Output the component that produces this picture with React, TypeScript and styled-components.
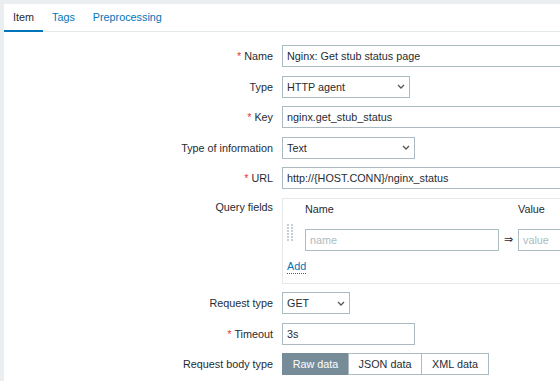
import React from "react";
import styled, { createGlobalStyle } from "styled-components";

const GlobalStyle = createGlobalStyle`
  html, body {
    margin: 0;
    padding: 0;
    overflow: hidden;
    background: #ebeef0;
  }
  body {
    font-family: "Liberation Sans", Arial, sans-serif;
    font-size: 10.8px;
    color: #1f2c33;
  }
  * {
    box-sizing: border-box;
  }
`;

const Page = styled.div`
  padding: 4px 0 0 4px;
  width: 100vw;
  height: 100vh;
  overflow: hidden;
`;

const Panel = styled.div`
  background: #ffffff;
  height: 100%;
  overflow: hidden;
`;

const TabList = styled.nav`
  display: flex;
  height: 28px;
  border-bottom: 1px solid #e4e9eb;
`;

const Tab = styled.a<{ $active?: boolean }>`
  display: flex;
  align-items: center;
  height: 28px;
  margin-bottom: -1px;
  padding: 0 9px 1px;
  border-bottom: 2px solid ${(p) => (p.$active ? "#0275b8" : "transparent")};
  color: ${(p) => (p.$active ? "#1f2c33" : "#0275b8")};
  cursor: pointer;
  white-space: nowrap;
`;

const Form = styled.div`
  display: grid;
  grid-template-columns: 269px 1fr;
  column-gap: 9px;
  row-gap: 8.5px;
  padding-top: 13px;
`;

const Label = styled.label<{ $top?: boolean }>`
  text-align: right;
  line-height: ${(p) => (p.$top ? "14px" : "22px")};
  padding-top: ${(p) => (p.$top ? "2px" : "0")};
  white-space: nowrap;
`;

const Asterisk = styled.span`
  color: #e33734;
  margin-right: 3px;
`;

const TextInput = styled.input<{ $width: number }>`
  display: block;
  flex: none;
  width: ${(p) => p.$width}px;
  height: 22px;
  padding: 0 4px;
  border: 1px solid #acbbc2;
  border-radius: 0;
  background: #fff;
  font: inherit;
  color: #1f2c33;
  outline: none;

  &::placeholder {
    color: #acbbc2;
  }
`;

const SelectBox = styled.div<{ $width: number }>`
  display: flex;
  align-items: center;
  justify-content: space-between;
  width: ${(p) => p.$width}px;
  height: 22px;
  padding: 0 4px;
  border: 1px solid #acbbc2;
  background: #fff;
  cursor: pointer;

  svg {
    flex: none;
  }
`;

const QueryBox = styled.div`
  width: 420px;
  border: 1px solid #e4e9eb;
  padding: 3px 4px 9px 4px;
`;

const QueryGrid = styled.div`
  display: grid;
  grid-template-columns: 18px 194px 19px 1fr;
  align-items: center;
`;

const HeadCell = styled.div`
  line-height: 14px;
  padding-bottom: 13px;
`;

const Handle = styled.div`
  align-self: start;
  margin-top: -5px;
  line-height: 0;
`;

const Arrow = styled.div`
  text-align: center;
  font-family: "DejaVu Sans", sans-serif;
  font-size: 11px;
  color: #1f2c33;
`;

const AddLink = styled.a`
  display: inline-block;
  margin-top: 8px;
  line-height: 14px;
  color: #0275b8;
  border-bottom: 1px dotted #0275b8;
  cursor: pointer;
`;

const Segments = styled.div`
  display: flex;
`;

const Segment = styled.button<{ $active?: boolean; $width: number }>`
  width: ${(p) => p.$width}px;
  height: 22px;
  padding: 0;
  margin-left: -1px;
  font: inherit;
  border: 1px solid ${(p) => (p.$active ? "#768d99" : "#acbbc2")};
  background: ${(p) => (p.$active ? "#768d99" : "#fff")};
  color: ${(p) => (p.$active ? "#fff" : "#1f2c33")};
  cursor: pointer;

  &:first-child {
    margin-left: 0;
  }
`;

function Chevron() {
  return (
    <svg width="8" height="5" viewBox="0 0 8 5">
      <polyline points="1,1 4,4 7,1" fill="none" stroke="#555" strokeWidth="1.3" />
    </svg>
  );
}

function DragHandle() {
  const dots = [];
  for (let r = 0; r < 6; r++) {
    for (let c = 0; c < 2; c++) {
      dots.push(<rect key={`${r}-${c}`} x={c * 4} y={r * 3} width="2" height="2" fill="#c5d0d6" />);
    }
  }
  return (
    <svg width="6" height="17" viewBox="0 0 6 17">
      {dots}
    </svg>
  );
}

function Select({ value, width }: { value: string; width: number }) {
  return (
    <SelectBox $width={width}>
      <span>{value}</span>
      <Chevron />
    </SelectBox>
  );
}

function Req() {
  return <Asterisk>*</Asterisk>;
}

export default function App() {
  return (
    <Page>
      <GlobalStyle />
      <Panel>
        <TabList>
          <Tab $active>Item</Tab>
          <Tab>Tags</Tab>
          <Tab>Preprocessing</Tab>
        </TabList>

        <Form>
          <Label><Req />Name</Label>
          <TextInput $width={408} defaultValue="Nginx: Get stub status page" />

          <Label>Type</Label>
          <Select value="HTTP agent" width={128} />

          <Label><Req />Key</Label>
          <TextInput $width={408} defaultValue="nginx.get_stub_status" />

          <Label>Type of information</Label>
          <Select value="Text" width={133} />

          <Label><Req />URL</Label>
          <TextInput $width={408} defaultValue="http://{HOST.CONN}/nginx_status" />

          <Label $top>Query fields</Label>
          <QueryBox>
            <QueryGrid>
              <HeadCell />
              <HeadCell>Name</HeadCell>
              <HeadCell />
              <HeadCell>Value</HeadCell>

              <Handle><DragHandle /></Handle>
              <TextInput $width={194} placeholder="name" />
              <Arrow>⇒</Arrow>
              <TextInput $width={180} placeholder="value" />
            </QueryGrid>
            <AddLink>Add</AddLink>
          </QueryBox>

          <Label>Request type</Label>
          <Select value="GET" width={68} />

          <Label><Req />Timeout</Label>
          <TextInput $width={133} defaultValue="3s" />

          <Label>Request body type</Label>
          <Segments>
            <Segment $active $width={67}>Raw data</Segment>
            <Segment $width={74}>JSON data</Segment>
            <Segment $width={68}>XML data</Segment>
          </Segments>
        </Form>
      </Panel>
    </Page>
  );
}
